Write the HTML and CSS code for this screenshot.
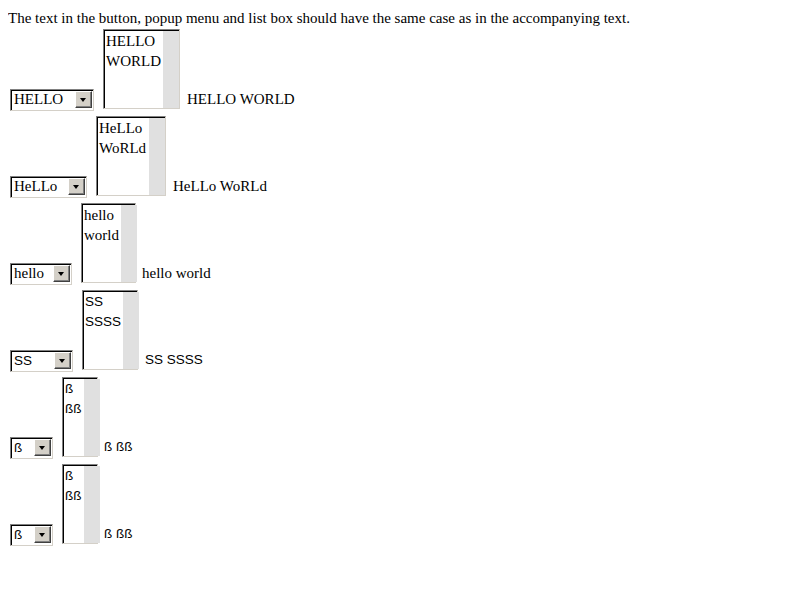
FILE: index.html
```html
<!DOCTYPE html>
<html>
<head>
<meta charset="utf-8">
<link rel="stylesheet" href="styles.css">
</head>
<body>
<p class="intro">The text in the button, popup menu and list box should have the same case as in the accompanying text.</p>

<div class="row serif r1">
  <span class="select"><span class="val">HELLO</span><span class="arrow"></span></span>
  <span class="listbox"><span class="opts"><span>HELLO</span><span>WORLD</span></span><span class="track"></span></span>
  <span class="label">HELLO WORLD</span>
</div>

<div class="row serif r2">
  <span class="select"><span class="val">HeLLo</span><span class="arrow"></span></span>
  <span class="listbox"><span class="opts"><span>HeLLo</span><span>WoRLd</span></span><span class="track"></span></span>
  <span class="label">HeLLo WoRLd</span>
</div>

<div class="row serif r3">
  <span class="select"><span class="val">hello</span><span class="arrow"></span></span>
  <span class="listbox"><span class="opts"><span>hello</span><span>world</span></span><span class="track"></span></span>
  <span class="label">hello world</span>
</div>

<div class="row sans r4">
  <span class="select"><span class="val">SS</span><span class="arrow"></span></span>
  <span class="listbox"><span class="opts"><span>SS</span><span>SSSS</span></span><span class="track"></span></span>
  <span class="label">SS SSSS</span>
</div>

<div class="row sans r5">
  <span class="select"><span class="val">ß</span><span class="arrow"></span></span>
  <span class="listbox"><span class="opts"><span>ß</span><span>ßß</span></span><span class="track"></span></span>
  <span class="label">ß ßß</span>
</div>

<div class="row sans r5">
  <span class="select"><span class="val">ß</span><span class="arrow"></span></span>
  <span class="listbox"><span class="opts"><span>ß</span><span>ßß</span></span><span class="track"></span></span>
  <span class="label">ß ßß</span>
</div>
</body>
</html>
```

FILE: styles.css
```css
html, body {
  background: #fff;
  color: #000;
}
body {
  margin: 8px;
  font-family: "Liberation Serif", serif;
  font-size: 15px;
}
.intro {
  margin: 0;
  line-height: 20px;
  font-size: 15px;
}
.row {
  display: flex;
  align-items: flex-end;
  height: 82px;
  margin-top: 1px;
  margin-bottom: 5px;
}
.serif { font-family: "Liberation Serif", serif; font-size: 15px; }
.sans { font-family: "Liberation Sans", sans-serif; font-size: 13.5px; }

.select {
  display: flex;
  height: 22px;
  box-sizing: border-box;
  margin-left: 2px;
  margin-right: 9px;
  border: 1px solid;
  border-color: #808080 #d4d0c8 #d4d0c8 #808080;
  box-shadow: inset 1px 1px 0 #000;
  background: #fff;
}
.val {
  padding: 0 3px 0 3px;
  line-height: 19px;
  flex: 1;
  white-space: nowrap;
}
.arrow {
  width: 17px;
  height: 17px;
  margin: 1px 1px 0 0;
  box-sizing: border-box;
  background: #d4d0c8;
  border: 1px solid;
  border-color: #fff #404040 #404040 #fff;
  box-shadow: inset -1px -1px 0 #808080;
  position: relative;
  flex: none;
}
.arrow::after {
  content: "";
  position: absolute;
  left: 4px;
  top: 6px;
  border-left: 3.5px solid transparent;
  border-right: 3.5px solid transparent;
  border-top: 4px solid #000;
}
.listbox {
  align-self: flex-start;
  display: flex;
  height: 80px;
  box-sizing: border-box;
  border: 1px solid;
  border-color: #808080 #d4d0c8 #d4d0c8 #808080;
  box-shadow: inset 1px 1px 0 #000;
  background: #fff;
  margin-right: 7px;
}
.opts {
  display: flex;
  flex-direction: column;
  flex: 1;
  padding: 1px 2px 0 2px;
  line-height: 20px;
  white-space: nowrap;
}
.track {
  width: 16px;
  flex: none;
  background: #e0e0e0;
  margin-top: 1px;
}
.label {
  line-height: 20px;
  margin-bottom: 2px;
  white-space: nowrap;
}

.r1 .select { width: 84px; }
.r1 .listbox { width: 77px; }
.r2 .select { width: 77px; }
.r2 .listbox { width: 70px; }
.r3 .select { width: 62px; }
.r3 .listbox { width: 55px; }
.r3 .label { margin-left: -1px; }
.r4 .select { width: 63px; }
.r4 .listbox { width: 56px; }
.r5 .select { width: 43px; }
.r5 .listbox { width: 36px; }
.r5 .label { margin-left: -1px; }
```
